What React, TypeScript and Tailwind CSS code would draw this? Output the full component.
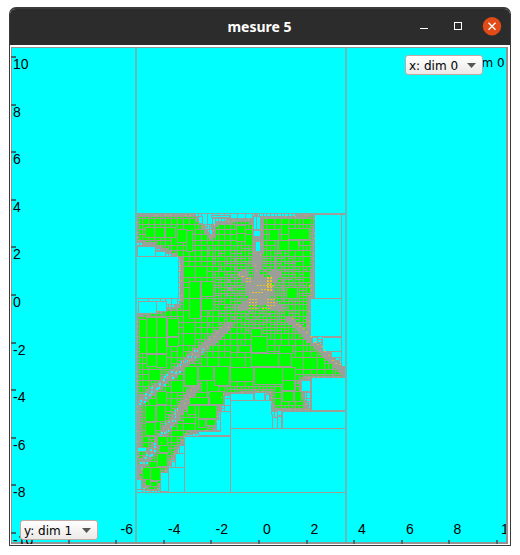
import React from "react";

type Pt = [number, number];
type Rect = [number, number, number, number];

// Outline of the proven (green) area, in window pixels.
const REGION: Pt[] = [
  [137, 215], [194, 215], [202, 226], [210, 237], [214, 233], [211, 225], [225, 221], [252, 219],
  [254, 262], [257, 277], [260, 262], [262, 217], [314, 215], [313, 262], [310, 298], [308, 331],
  [318, 343], [346, 371], [346, 377], [303, 377], [299, 382], [301, 392], [308, 409], [272, 410],
  [270, 391], [231, 392], [222, 394], [214, 429], [186, 433], [173, 454], [156, 490], [146, 490],
  [137, 474], [137, 315], [177, 306], [181, 298], [180, 257], [155, 245], [137, 240],
];

// Narrow undetermined strips: x1, y1, x2, y2, half width.
const BANDS: [number, number, number, number, number][] = [
  [137, 403, 228, 325, 3.6],
  [137, 471, 195, 386, 3.5],
  [256, 217, 257, 282, 2.6],
  [289, 318, 346, 374, 2.6],
  [138, 400, 138, 448, 2.5],
];

const noise = (x: number, y: number) => {
  const v = Math.sin(x * 12.9898 + y * 78.233) * 43758.5453;
  return v - Math.floor(v);
};

const segDist = (x: number, y: number, x1: number, y1: number, x2: number, y2: number) => {
  const dx = x2 - x1;
  const dy = y2 - y1;
  const t = Math.max(0, Math.min(1, ((x - x1) * dx + (y - y1) * dy) / (dx * dx + dy * dy)));
  return Math.hypot(x - x1 - t * dx, y - y1 - t * dy);
};

const inside = (x: number, y: number) => {
  let r = false;
  for (let i = 0, j = REGION.length - 1; i < REGION.length; j = i++) {
    const [xi, yi] = REGION[i];
    const [xj, yj] = REGION[j];
    if (yi > y !== yj > y && x < ((xj - xi) * (y - yi)) / (yj - yi) + xi) r = !r;
  }
  return r;
};

const classify = (x: number, y: number): "g" | "c" | "u" => {
  for (const [x1, y1, x2, y2, w] of BANDS) if (segDist(x, y, x1, y1, x2, y2) < w) return "u";
  for (let i = 0, j = REGION.length - 1; i < REGION.length; j = i++) {
    if (segDist(x, y, REGION[j][0], REGION[j][1], REGION[i][0], REGION[i][1]) < 0.9) return "u";
  }
  return inside(x, y) ? "g" : "c";
};

const target = (x: number, y: number) => {
  const r = Math.hypot((x - 259) * 0.95, y - 290);
  // The star-shaped core stays undecided, with diagonal arms.
  const arm = Math.abs(Math.abs(x - 259) - Math.abs(y - 291)) < 5 ? 13 : 0;
  if (r < 13 + arm) return 0;
  if (r < 32) return 3;
  if (r < 46) return 4.2;
  if (x > 228 && y < 335) return y < 262 ? 7.5 : 5.6;
  if (y < 280 && x < 180) return 9;
  if (y < 330) return x > 205 ? 6 : 8;
  if (x > 215 && y < 352) return 7.5;
  return 11;
};

const rectPath = (x: number, y: number, w: number, h: number) => `M${x} ${y}h${w}v${h}h${-w}z`;

const buildCells = () => {
  const out = { green: "", cyan: "", yellow: "", core: "" };
  const visit = (x0: number, y0: number, x1: number, y1: number) => {
    const w = x1 - x0;
    const h = y1 - y0;
    const cx = (x0 + x1) / 2;
    const cy = (y0 + y1) / 2;
    const seen = new Set<string>();
    if (w <= 60 && h <= 60) {
      for (let y = y0 + 0.5; y < y1; y += 1.3) for (let x = x0 + 0.5; x < x1; x += 1.3) seen.add(classify(x, y));
      if (seen.size === 1 && !seen.has("u")) {
        const size = target(cx, cy) * (0.8 + noise(x0, y0) * 0.8);
        if (size === 0 && w < 6 && h < 6) return;
        if (seen.has("c") || (w <= size && h <= size)) {
          const l = Math.round(x0);
          const t = Math.round(y0);
          const cw = Math.round(x1) - l - 1;
          const ch = Math.round(y1) - t - 1;
          if (cw > 0 && ch > 0) {
            const p = rectPath(l + 1, t + 1, cw, ch);
            if (seen.has("c")) out.cyan += p;
            else out.green += p;
          }
          return;
        }
      }
      if (w <= 2.9 && h <= 2.9) return;
    }
    if (w >= h * 0.95) {
      visit(x0, y0, cx, y1);
      visit(cx, y0, x1, y1);
    } else {
      visit(x0, y0, x1, cy);
      visit(x0, cy, x1, y1);
    }
  };
  visit(136, 213, 230, 298);
  visit(230, 213, 346, 298);
  visit(136, 298, 230, 392);
  visit(230, 298, 346, 392);
  visit(136, 392, 230, 492);
  visit(230, 392, 346, 492);

  // Specks scattered along the two diagonal strips.
  for (const [x1, y1, x2, y2] of BANDS.slice(0, 2)) {
    for (let i = 0; i < 85; i++) {
      const t = i / 85;
      const off = (noise(i, x2) - 0.5) * 7;
      const x = Math.round(x1 + (x2 - x1) * t + off * 0.65);
      const y = Math.round(y1 + (y2 - y1) * t + off * 0.76);
      if (x < 138) continue;
      if (i % 4 === 0) out.yellow += rectPath(x, y, 1, 1);
      else if (t < 0.72 && i % 2) out.cyan += rectPath(x, y, t < 0.45 ? 2 : 1, 2);
    }
  }
  // Remaining undecided boxes on the outline.
  for (let i = 0; i < REGION.length; i++) {
    const [ax, ay] = REGION[i];
    const [bx, by] = REGION[(i + 1) % REGION.length];
    const len = Math.hypot(bx - ax, by - ay);
    for (let d = 3; d < len; d += 5) {
      if (noise(i, d) < 0.5) continue;
      out.yellow += rectPath(Math.round(ax + ((bx - ax) * d) / len), Math.round(ay + ((by - ay) * d) / len), 1, 1);
    }
  }
  for (let i = 0; i < 14; i++) {
    out.yellow += rectPath(Math.round(292 + i * 3.6), Math.round(319 + i * 3.6 + (noise(i, 4) - 0.5) * 4), 2, 1);
  }
  // Regular lattices around the origin: x, y, columns, rows on a 3px pitch.
  const lattices: Rect[] = [
    [267, 277, 2, 5], [257, 285, 6, 1], [261, 289, 4, 1], [249, 299, 3, 4], [267, 299, 3, 3],
    [246, 278, 2, 2], [252, 292, 4, 1], [262, 308, 3, 1],
  ];
  for (const [x, y, cols, rows] of lattices) {
    for (let r = 0; r < rows; r++) {
      for (let c = 0; c < cols; c++) out.core += rectPath(x + c * 3, y + r * 3, 2, x === 267 && y === 277 ? 2 : 1);
    }
  }
  out.core += rectPath(239, 274, 1, 1) + rectPath(241, 276, 3, 1) + rectPath(309, 285, 1, 2);
  return out;
};

const CELLS = buildCells();

const OUTER: Rect[] = [
  [137, 257, 41, 41], [139, 302, 17, 11], [157, 302, 9, 9], [138, 247, 17, 9], [156, 252, 9, 4],
  [315, 215, 26, 83], [342, 215, 4, 151], [311, 299, 30, 37], [323, 338, 18, 13], [332, 352, 9, 5],
  [313, 338, 4, 5], [312, 378, 34, 32], [283, 412, 63, 16], [302, 381, 8, 10], [231, 401, 40, 27],
  [271, 415, 1, 13], [278, 411, 3, 4], [278, 417, 3, 11], [231, 394, 22, 6], [255, 393, 9, 7], [266, 395, 3, 5],
  [231, 429, 115, 63], [185, 437, 45, 55], [169, 468, 15, 24], [161, 473, 7, 18], [176, 454, 8, 13],
  [180, 446, 4, 7], [199, 432, 22, 3], [221, 412, 9, 23], [217, 420, 3, 10],
  [138, 448, 8, 3], [137, 480, 4, 9],
  [199, 217, 3, 6], [212, 216, 17, 1], [254, 217, 2, 12], [257, 217, 3, 12], [254, 231, 6, 5], [256, 242, 4, 9],
];

const INNER: Rect[] = [
  [146, 228, 8, 9], [155, 228, 9, 9], [166, 228, 9, 9], [178, 230, 8, 12], [187, 231, 5, 20],
  [190, 282, 10, 16], [202, 282, 11, 14], [190, 299, 10, 19], [202, 299, 11, 11],
  [147, 318, 9, 19], [157, 318, 9, 19], [168, 319, 10, 17], [140, 320, 6, 17], [140, 338, 6, 15],
  [147, 338, 9, 15], [157, 338, 9, 15], [168, 338, 10, 8], [147, 355, 9, 11], [157, 355, 9, 12],
  [252, 337, 15, 15], [252, 354, 26, 12], [280, 346, 12, 7], [231, 368, 22, 13], [255, 368, 27, 16],
  [283, 368, 12, 12], [283, 381, 11, 9], [283, 392, 10, 9], [295, 392, 6, 9],
  [252, 329, 9, 7], [231, 346, 6, 6], [239, 346, 11, 6], [279, 354, 12, 12],
  [237, 226, 8, 7], [237, 234, 8, 7], [270, 230, 8, 10], [279, 241, 9, 9], [289, 229, 10, 10],
  [299, 229, 10, 10], [289, 241, 9, 9], [287, 288, 10, 10],
  [146, 406, 9, 15], [157, 406, 8, 15], [157, 392, 9, 12], [146, 423, 9, 12], [199, 406, 17, 12],
  [190, 398, 18, 6], [188, 406, 7, 8], [210, 392, 13, 12], [199, 420, 6, 7], [207, 420, 8, 5],
  [158, 437, 9, 8], [158, 454, 9, 12], [160, 446, 8, 6], [143, 468, 7, 11], [151, 468, 9, 12],
  [151, 482, 6, 4], [146, 480, 4, 5], [185, 367, 12, 18], [199, 367, 14, 13], [215, 367, 14, 18],
];

const Y_TICKS: [string, number][] = [
  ["10", 57], ["8", 105], ["6", 152], ["4", 200], ["2", 247], ["0", 295],
  ["-2", 343], ["-4", 390], ["-6", 438], ["-8", 485], ["-10", 533],
];
const X_TICKS = [69, 116, 164, 211, 259, 307, 354, 402, 449, 497];
const X_LABELS: [string, number][] = [
  ["-6", 120.5], ["-4", 168], ["-2", 215.5], ["0", 263], ["2", 310.5], ["4", 358], ["6", 406], ["8", 453.5], ["10", 501],
];

const join = (list: Rect[]) => list.map((r) => rectPath(r[0], r[1], r[2], r[3])).join("");

function Plot() {
  return (
    <svg width="497" height="497" viewBox="11 47 497 497" className="block" fontFamily="'Liberation Sans', Arial, sans-serif" fontSize="14">
      <clipPath id="plotClip">
        <rect x="12" y="48" width="494" height="494" />
      </clipPath>
      <rect x="11" y="47" width="497" height="497" fill="#949494" />
      <rect x="12" y="48" width="494" height="494" fill="#00ffff" />
      <g shapeRendering="crispEdges">
        <rect x="136" y="213" width="211" height="280" fill="#9c9f98" />
        <path d={CELLS.cyan} fill="#00ffff" />
        <path d={CELLS.green} fill="#00ff00" />
        <path d={join(OUTER.concat(INNER).map(([x, y, w, h]) => [x - 1, y - 1, w + 2, h + 2] as Rect))} fill="#9c9f98" />
        <path d={join(OUTER)} fill="#00ffff" />
        <path d={join(INNER)} fill="#00ff00" />
        <path d={CELLS.yellow} fill="#e0b640" />
        <path d={CELLS.core} fill="#e8c22e" />
        <path d="M135 48h2v494h-2zM345 48h2v494h-2z" fill="#68b9b9" />
        {Y_TICKS.map(([t, y]) => (
          <rect key={t} x="11" y={y - 1} width="5" height="2" fill="#306f6f" />
        ))}
        {X_TICKS.map((x) => (
          <rect key={x} x={x - 1} y="540" width="2" height="4" fill="#4b6b6b" />
        ))}
      </g>
      {Y_TICKS.map(([t, y]) => (
        <text key={t} x="13" y={y + 12}>{t}</text>
      ))}
      {X_LABELS.map(([t, x]) => (
        <text key={t} x={x} y="534" clipPath="url(#plotClip)">{t}</text>
      ))}
      <text x="470.5" y="67" fontSize="12" fontFamily="'DejaVu Sans', sans-serif">dim 0</text>
      <path d="M506 47h2v497h-2z" fill="#929292" />
    </svg>
  );
}

function Combo({ label, place }: { label: string; place: string }) {
  return (
    <div className={`absolute ${place} flex h-5 w-[78px] items-center justify-between rounded-[3px] border border-[#c0aaa5] bg-linear-to-b from-white to-[#ece9e7] pr-[6px] pl-[3px] font-['DejaVu_Sans',sans-serif] text-[12px] leading-none whitespace-pre text-black`}>
      <span className="pt-px">{label}</span>
      <svg width="9" height="5" viewBox="0 0 9 5"><path d="M0 0h9L4.5 5z" fill="#555" /></svg>
    </div>
  );
}

export default function App() {
  return (
    <div className="h-[555px] w-[520px] overflow-hidden bg-white pt-[7px] pl-[9px]">
      <div className="h-[539px] w-[502px] overflow-hidden rounded-t-[7px] border border-t-2 border-[#3b3b3b] bg-white">
        <div className="grid h-9 grid-cols-[1fr_auto_1fr] items-center bg-[#2c2c2c] text-white">
          <span />
          <h1 className="pr-px font-['Noto_Sans',sans-serif] text-[14px] leading-none font-bold">mesure 5</h1>
          <div className="flex items-center justify-end pr-[8px]">
            <svg width="82" height="20" viewBox="0 0 82 20" fill="none">
              <path d="M0 11.5h8" stroke="#fff" />
              <rect x="34.5" y="5.5" width="7" height="7" stroke="#fff" />
              <circle cx="72" cy="9.2" r="9.2" fill="#e24a17" />
              <path d="m68.5 5.7 7 7m0-7-7 7" stroke="#fff" strokeWidth="1.4" />
            </svg>
          </div>
        </div>
        <main className="relative mt-0.5 ml-px h-[497px] w-[497px]">
          <Plot />
          <Combo label="x: dim 0" place="top-2 left-[394px]" />
          <Combo label="y: dim 1" place="top-[473px] left-[9px]" />
        </main>
      </div>
    </div>
  );
}
